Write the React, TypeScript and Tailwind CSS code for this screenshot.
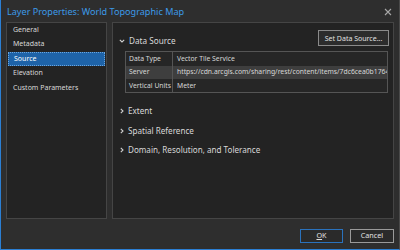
const navItems = ["General", "Metadata", "Source", "Elevation", "Custom Parameters"];

const rows = [
	{ label: "Data Type", value: "Vector Tile Service", active: false },
	{ label: "Server", value: "https://cdn.arcgis.com/sharing/rest/content/items/7dc6cea0b1764a1f9af2e679f642f0f5", active: true },
	{ label: "Vertical Units", value: "Meter", active: false },
];

const sections = ["Extent", "Spatial Reference", "Domain, Resolution, and Tolerance"];

const ChevronDown = () => (
	<svg width="6" height="4" viewBox="0 0 6 4" className="shrink-0">
		<path d="M0.8 0.8l2.2 2.2L5.2 0.8" stroke="#cfcfcf" strokeWidth="1.1" fill="none" />
	</svg>
);

const ChevronRight = () => (
	<svg width="4" height="6" viewBox="0 0 4 6" className="shrink-0">
		<path d="M0.8 0.8l2.2 2.2L0.8 5.2" stroke="#cfcfcf" strokeWidth="1.1" fill="none" />
	</svg>
);

export default function App() {
	return (
		<div
			className="w-[400px] h-[250px] bg-[#2e2e2e] border-l border-b border-[#2b7fd4] border-r border-r-[#4a4a4a] flex flex-col text-[#d8d8d8]"
			style={{ fontFamily: '"Noto Sans", "Open Sans", sans-serif' }}
		>
			<div className="h-[22px] shrink-0 flex items-center justify-between pl-[6px] pr-[7px] pt-[2px]">
				<span className="text-[9.1px] text-[#3c9ae8] leading-none">Layer Properties: World Topographic Map</span>
				<svg width="8" height="8" viewBox="0 0 8 8">
					<path d="M1 1l6 6M7 1l-6 6" stroke="#a8a8a8" strokeWidth="1.1" />
				</svg>
			</div>

			<div className="flex gap-[5px] px-[5px] h-[197px] shrink-0">
				<div className="w-[101px] shrink-0 bg-[#232323] border border-[#454545] px-[1px]">
					{navItems.map((item) => (
						<div
							key={item}
							className={`h-[14.4px] flex items-center pl-[5px] text-[7px] whitespace-nowrap ${
								item === "Source" ? "bg-[#1e63a8] text-white border border-dotted border-[#6aa6e0]" : ""
							}`}
						>
							{item}
						</div>
					))}
				</div>

				<div className="flex-1 min-w-0 bg-[#232323] border border-[#454545] pl-[6px] pr-[4px] pt-[7px]">
					<div className="flex justify-end">
						<button className="w-[71px] h-[16px] border border-[#8a8a8a] bg-[#2c2c2c] text-[7px] text-[#e0e0e0] leading-none">
							Set Data Source...
						</button>
					</div>
					<div className="flex items-center gap-[4px] -mt-[9px]">
						<ChevronDown />
						<span className="text-[8.2px] leading-none">Data Source</span>
					</div>
					<div className="ml-[6px] mr-[1px] mt-[6px] border border-[#555] bg-[#262626] overflow-hidden">
						{rows.map((row) => (
							<div
								key={row.label}
								className={`flex h-[13.4px] items-center text-[6.8px] whitespace-nowrap ${row.active ? "bg-[#3e3e3e]" : ""}`}
							>
								<div className="w-[47px] shrink-0 pl-[3px] h-full flex items-center border-r border-[#555]">{row.label}</div>
								<div className="pl-[4px] overflow-hidden">{row.value}</div>
							</div>
						))}
					</div>

					<div className="mt-[8px] flex flex-col">
						{sections.map((s) => (
							<div key={s} className="h-[19.5px] flex items-center gap-[4px] pl-[1px] text-[8.1px]">
								<ChevronRight />
								<span>{s}</span>
							</div>
						))}
					</div>
				</div>
			</div>

			<div className="flex justify-end gap-[7px] pr-[5px] pt-[10px]">
				<button className="w-[43px] h-[14px] border border-[#2a72bd] bg-[#2a2a2a] text-[7.2px] text-[#e0e0e0] leading-none">
					<span className="underline">O</span>K
				</button>
				<button className="w-[44px] h-[14px] border border-[#9a9a9a] bg-[#2a2a2a] text-[7.2px] text-[#e0e0e0] leading-none">
					Cancel
				</button>
			</div>
		</div>
	);
}
